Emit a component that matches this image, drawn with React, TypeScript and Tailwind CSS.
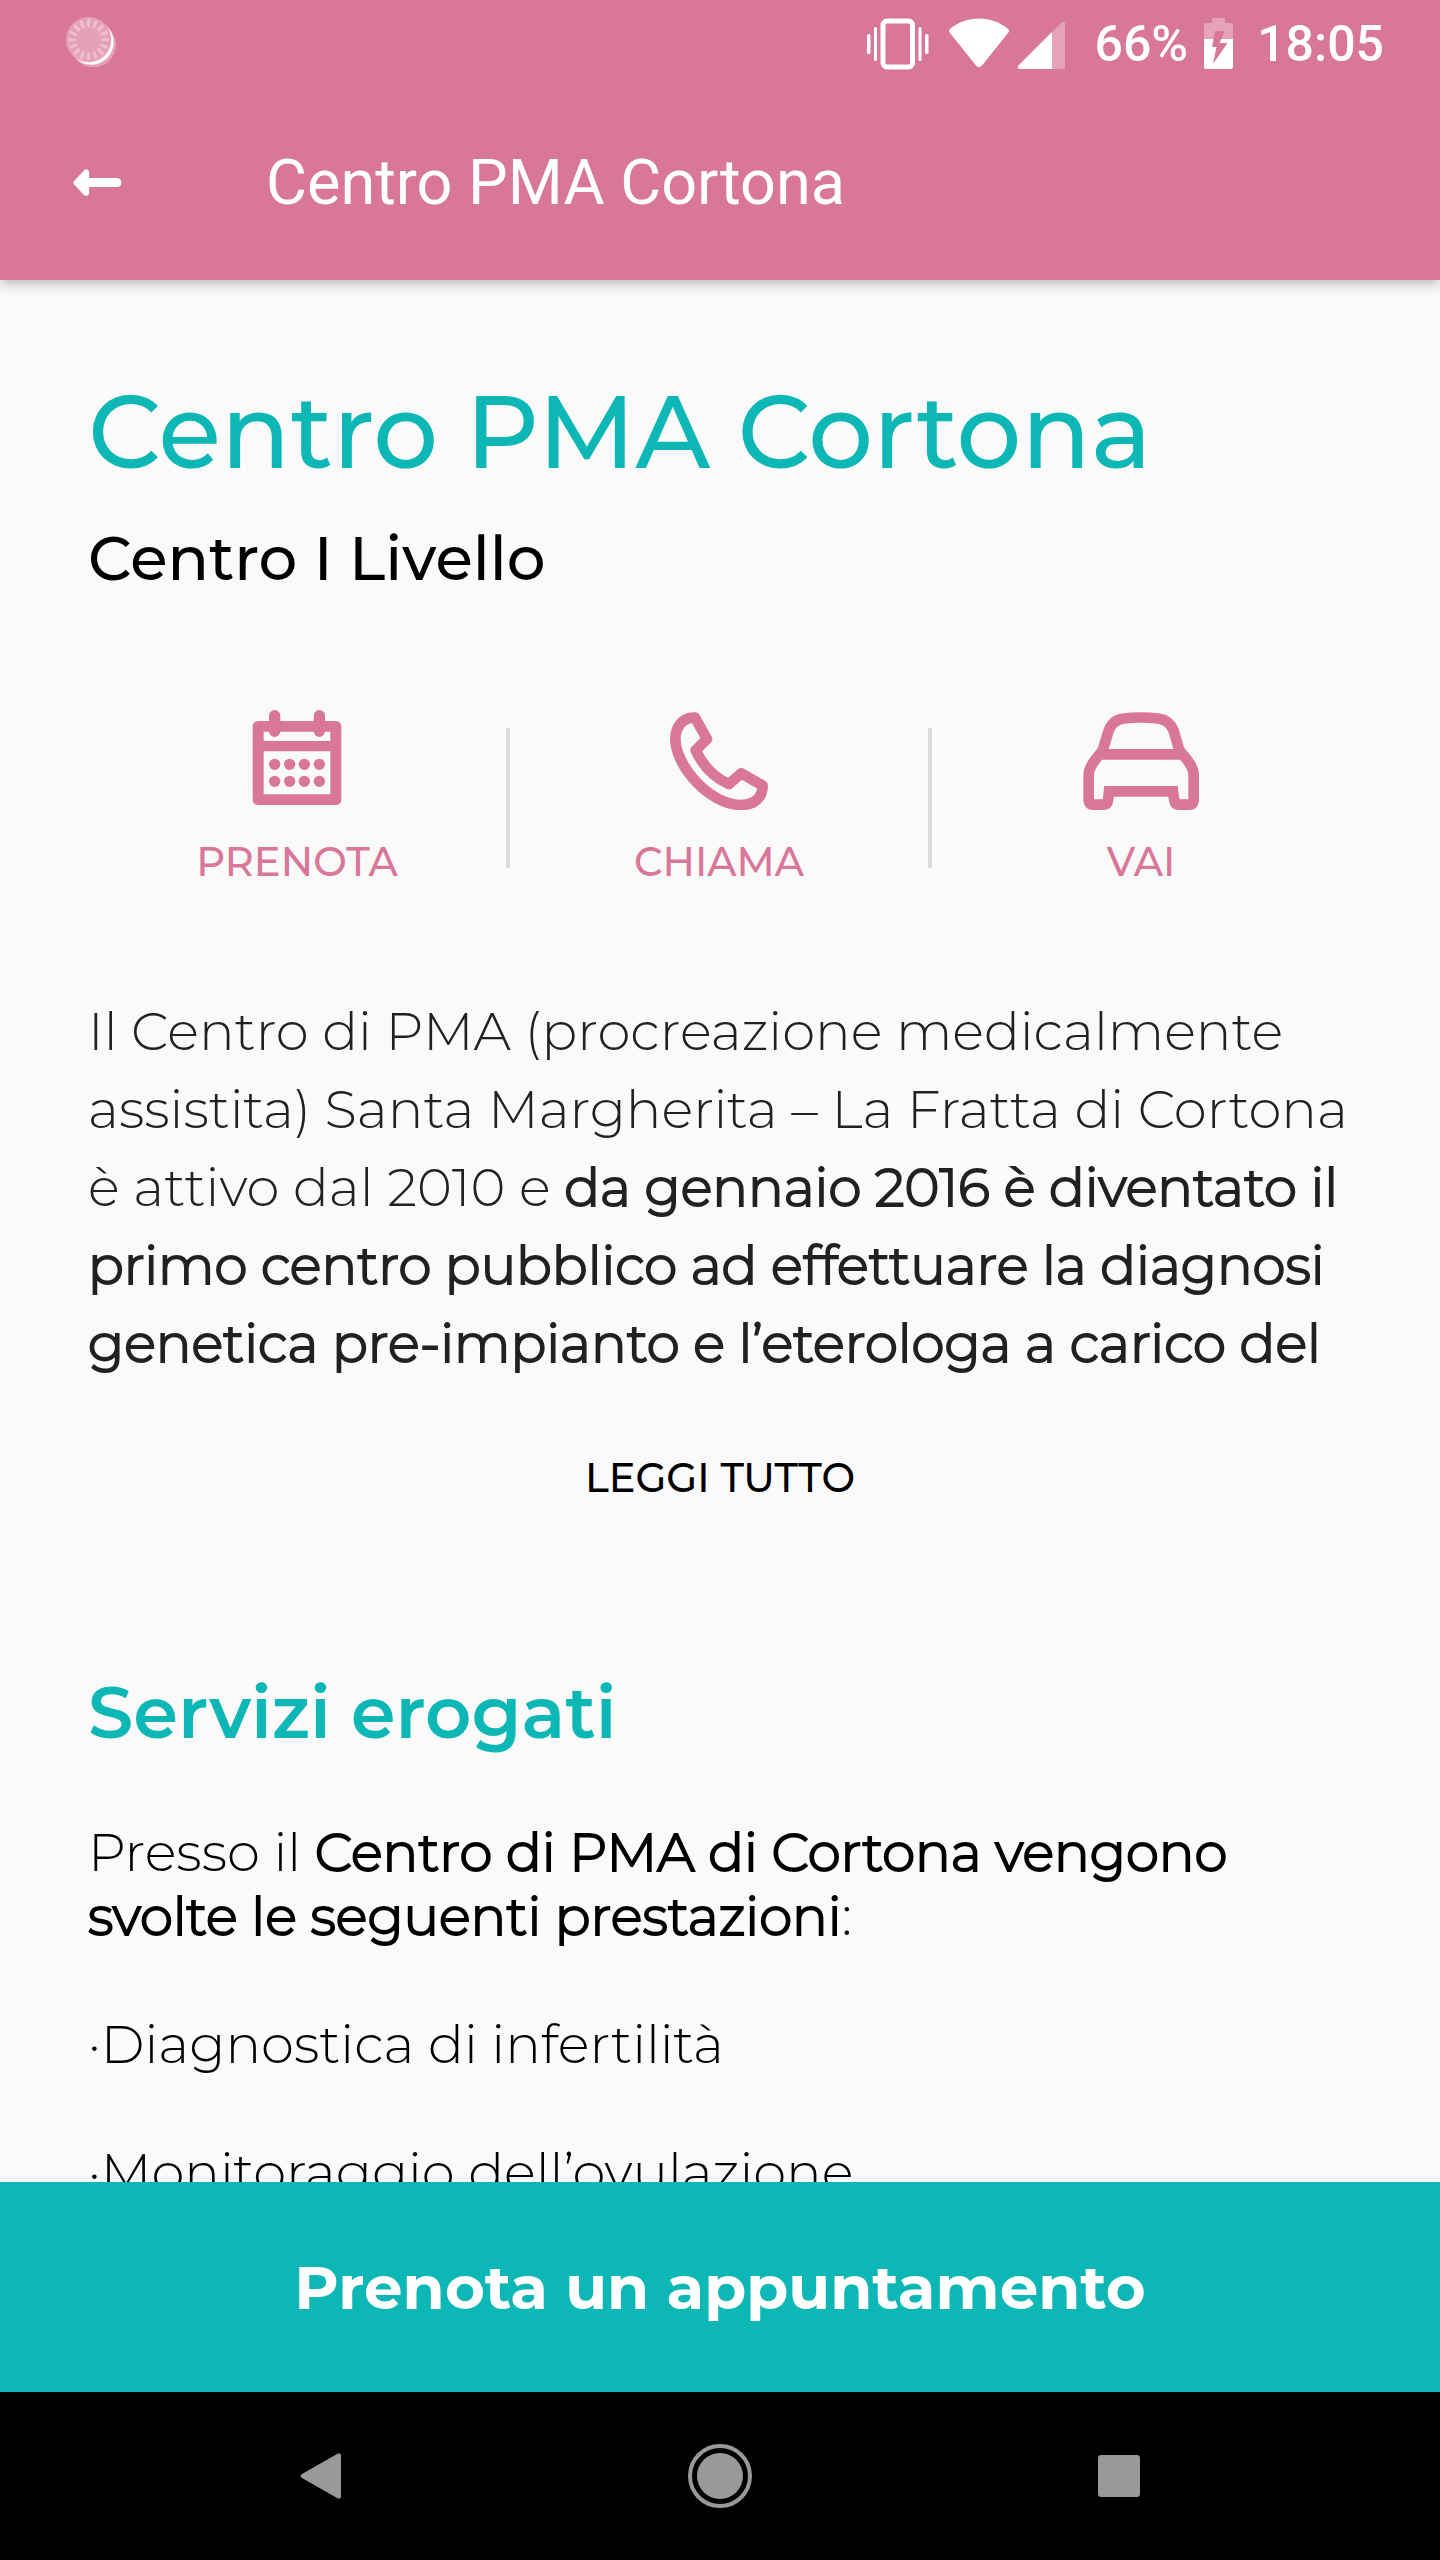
import type { ReactNode } from "react";

const StatusBar = () => (
  <div className="flex h-[84px] items-center px-14 pt-1 font-['Roboto',sans-serif] text-[50px] leading-[60px] font-medium">
    <svg viewBox="198 50 150 152" className="mb-1 ml-[10px] w-[50px]" aria-hidden="true">
      <circle cx="280" cy="133" r="68" fill="#e6a1ba" />
      <circle cx="274" cy="126" r="67" fill="#fff" />
      <circle cx="266" cy="118" r="68" fill="#e6a1ba" />
      <g stroke="#eebfd0" strokeWidth="9" strokeLinecap="round">
        {Array.from({ length: 16 }, (_, i) => (
          <path key={i} d="M308 118h16" transform={`rotate(${i * 22.5} 266 118)`} />
        ))}
      </g>
    </svg>

    <svg viewBox="865 16 62 52" className="ml-auto w-[62px]" fill="#fff" aria-hidden="true">
      <rect x="881" y="19" width="29.500" height="46" rx="4" fill="none" stroke="#fff" strokeWidth="5" />
      <rect x="872" y="25" width="3" height="34" rx="1.500" />
      <rect x="865" y="32" width="3.500" height="20" rx="1.500" />
      <rect x="916.500" y="25" width="3" height="34" rx="1.500" />
      <rect x="923" y="32" width="3.500" height="20" rx="1.500" />
    </svg>
    <svg viewBox="948 16 60 52" className="ml-5 w-[60px]" fill="#fff" aria-hidden="true">
      <path d="M949 27C965 13 991 13 1007 27Q1009 29 1007 31L981 63.500Q978 67 975 63.500L949 31Q947 29 949 27Z" />
    </svg>
    <svg viewBox="1017 16 49 52" className="ml-2 w-[49px]" fill="#fff" aria-hidden="true">
      <path d="M1018.500 63.500 1061 21Q1065 18 1065 22V65Q1065 67 1063 67H1020Q1016.500 67 1018.500 63.500Z" fillOpacity=".32" />
      <path d="M1052 30V67H1020Q1016.500 67 1018.500 63.500Z" />
    </svg>
    <span className="ml-7">66%</span>
    <svg viewBox="1203 16 29 52" className="ml-4 w-[29px]" fill="#fff" aria-hidden="true">
      <path d="M1211 16h13v5h6q2 0 2 2v14h-29V23q0-2 2-2h6z" fillOpacity=".32" />
      <path d="M1203 37h29v28q0 2-2 2h-25q-2 0-2-2z" />
      <path d="M1214 29h10l-5.500 12h8L1212 62l3.500-17H1211z" fill="#d97799" />
    </svg>
    <span className="ml-6">18:05</span>
  </div>
);

const CalendarIcon = () => (
  <svg viewBox="229 90 360 300" className="w-[120px]" fill="currentColor" aria-hidden="true">
    <path
      fillRule="evenodd"
      d="M294 123H524Q542 123 542 141V357Q542 375 524 375H294Q276 375 276 357V141Q276 123 294 123ZM309 155V183H509V155ZM309 214V343H509V214Z"
    />
    <path d="M342 107v47M476 107v47" stroke="currentColor" strokeWidth="34" strokeLinecap="round" />
    {[253, 304].map((cy) => [342, 387, 431, 476].map((cx) => <circle key={`${cx}-${cy}`} cx={cx} cy={cy} r="17" />))}
  </svg>
);

const PhoneIcon = () => (
  <svg viewBox="294 90 360 300" className="w-[120px]" fill="none" stroke="currentColor" strokeWidth="32" strokeLinejoin="round" aria-hidden="true">
    <path d="M402 113 438 177 404 211C427 260 462 294 504 312L541 280 605 317C605 350 582 375 542 375C442 375 343 255 343 176C343 142 366 110 402 113Z" />
  </svg>
);

const CarIcon = () => (
  <svg viewBox="357 90 360 300" className="w-[120px]" fill="none" stroke="currentColor" strokeWidth="32" aria-hidden="true">
    <path d="M422 211 440 152Q452 120 482 116Q537 109 592 116Q622 120 635 152L652 211" />
    <path d="M410 223H664" />
    <path d="M421 213C395 245 380 262 380 286V362Q382 374 393 374H424Q436 374 438 362L441 334H633L637 362Q639 374 651 374H682Q693 374 695 362V286C695 262 680 245 654 213" />
  </svg>
);

const actions: { label: string; icon: ReactNode }[] = [
  { label: "PRENOTA", icon: <CalendarIcon /> },
  { label: "CHIAMA", icon: <PhoneIcon /> },
  { label: "VAI", icon: <CarIcon /> },
];

const services = ["Diagnostica di infertilità", "Monitoraggio dell’ovulazione"];

// Light weight thickened by a stroke, so the line lengths stay those of the light text
const Strong = ({ children }: { children: ReactNode }) => (
  <strong className="font-light [-webkit-text-stroke:2px_currentColor]">{children}</strong>
);

const App = () => {
  return (
    <div className="flex h-screen flex-col overflow-hidden bg-[#fafafa] font-['Montserrat','Inter',sans-serif] text-black">
      <header className="relative z-10 shrink-0 bg-[#d97799] text-white shadow-[0_4px_12px_rgba(0,0,0,0.25)]">
        <StatusBar />
        <div className="flex h-[196px] items-center pt-[2px] pl-[73px]">
          <button type="button" aria-label="Indietro" className="w-[49px]">
            <svg viewBox="219 508 146 82" className="w-full" fill="#fff" aria-hidden="true">
              <path d="M223 543 251 513Q255 508 260 509Q267 510 267 518V535H350Q363 536 363 549Q363 561 350 562H267V579Q267 587 260 588Q255 589 251 585L223 555Q217 549 223 543Z" />
            </svg>
          </button>
          <span className="ml-36 font-['Roboto',sans-serif] text-[63px] leading-[76px]">Centro PMA Cortona</span>
        </div>
      </header>

      <main className="min-h-0 flex-1 overflow-hidden px-[88px] pt-[88px]">
        <h1 className="text-[102px] leading-[128px] font-medium text-[#0db7b6]">Centro PMA Cortona</h1>
        <p className="mt-5 text-[61px] leading-[84px] font-medium">Centro I Livello</p>

        <div className="mt-[104px] flex items-center pr-[2px]">
          {actions.map(({ label, icon }, i) => (
            <div key={label} className="contents">
              {i > 0 && <div className="h-[140px] w-1 bg-[#dcdcdc]" />}
              <button type="button" className="flex flex-1 flex-col items-center pt-[6px] pb-1 text-[#d97799]">
                {icon}
                <span className="mt-[26px] text-[40px] leading-[52px] font-medium">{label}</span>
              </button>
            </div>
          ))}
        </div>

        <p className="mt-[100px] text-[53px] leading-[78px] font-light text-[#212121]">
          Il Centro di PMA (procreazione medicalmente assistita) Santa Margherita – La Fratta di Cortona è attivo dal
          2010 e{" "}
          <Strong>
            da gennaio 2016 è diventato il primo centro pubblico ad effettuare la diagnosi genetica pre-impianto e
            l’eterologa a carico del
          </Strong>
        </p>

        <div className="mt-[54px] flex justify-center">
          <button type="button" className="text-[40px] leading-[84px] font-medium">LEGGI TUTTO</button>
        </div>

        <h2 className="mt-36 text-[72px] leading-[96px] font-semibold text-[#0db7b6]">Servizi erogati</h2>
        <p className="mt-[60px] text-[53px] leading-[64px] font-light">
          Presso il <Strong>Centro di PMA di Cortona vengono svolte le seguenti prestazioni</Strong>:
        </p>
        {services.map((service) => (
          <p key={service} className="mt-16 text-[53px] leading-[64px] font-light">·{service}</p>
        ))}
      </main>

      <button type="button" className="h-[210px] shrink-0 bg-[#0db7b6] text-[61px] leading-[80px] font-bold text-white">
        Prenota un appuntamento
      </button>

      <nav className="flex h-[168px] shrink-0 items-center bg-black px-[121px] text-[#999]">
        <button type="button" aria-label="Indietro" className="flex flex-1 justify-center">
          <svg viewBox="0 0 64 64" className="w-16" fill="currentColor" aria-hidden="true">
            <path d="M13 30 48 10Q52 8 52 12V52Q52 56 48 54L13 34Q10 32 13 30Z" />
          </svg>
        </button>
        <button type="button" aria-label="Home" className="flex flex-1 justify-center">
          <svg viewBox="0 0 64 64" className="w-16" fill="currentColor" aria-hidden="true">
            <circle cx="32" cy="32" r="30" fill="none" stroke="currentColor" strokeWidth="4" />
            <circle cx="32" cy="32" r="23" />
          </svg>
        </button>
        <button type="button" aria-label="Recenti" className="flex flex-1 justify-center">
          <svg viewBox="0 0 64 64" className="w-16" fill="currentColor" aria-hidden="true">
            <rect x="11" y="11" width="42" height="42" rx="3" />
          </svg>
        </button>
      </nav>
    </div>
  );
};

export default App;
